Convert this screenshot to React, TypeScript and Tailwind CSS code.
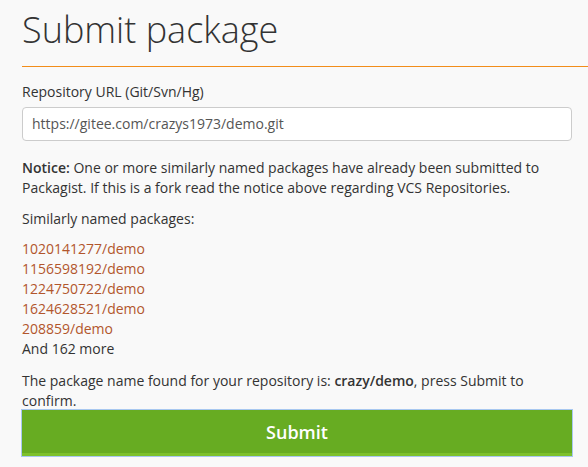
import React from "react";

export default function App() {
  const pkgs = [
    "1020141277/demo",
    "1156598192/demo",
    "1224750722/demo",
    "1624628521/demo",
    "208859/demo",
  ];
  return (
    <div
      className="min-h-[467px] w-[588px] overflow-hidden bg-[#f9f9f9] text-[14px] leading-[20px] text-[#333]"
      style={{ fontFamily: '"Open Sans", "Liberation Sans", sans-serif' }}
    >
      <div className="pl-[22px]">
        <h1 className="border-b border-[#f28d1a] pb-[16px] pt-[10px] text-[36px] font-light leading-[40px] text-[#333]">
          Submit package
        </h1>
        <div className="pr-[16px]">
          <label className="mt-[15px] block">Repository URL (Git/Svn/Hg)</label>
          <div className="mt-[5px] flex h-[34px] items-center rounded-[4px] border border-[#ccc] bg-white px-[9px] text-[#555]">
            https://gitee.com/crazys1973/demo.git
          </div>
          <p className="mt-[17px]">
            <strong className="font-semibold">Notice:</strong> One or more similarly named packages have
            already been submitted to Packagist. If this is a fork read the notice above regarding VCS
            Repositories.
          </p>
          <p className="mt-[11px]">Similarly named packages:</p>
          <ul className="mt-[10px]">
            {pkgs.map((p) => (
              <li key={p}>
                <a className="text-[#b2562c]">{p}</a>
              </li>
            ))}
            <li>And 162 more</li>
          </ul>
          <p className="mt-[12px]">
            The package name found for your repository is: <strong className="font-semibold">crazy/demo</strong>, press
            Submit to confirm.
          </p>
          <button className="mt-[-1px] flex h-[46px] w-full items-center justify-center border-b-[3px] border-[#7dc12c] bg-[#67ac22] text-[18px] font-semibold text-white outline outline-1 outline-[#a8c8f0]">
            Submit
          </button>
        </div>
      </div>
    </div>
  );
}
